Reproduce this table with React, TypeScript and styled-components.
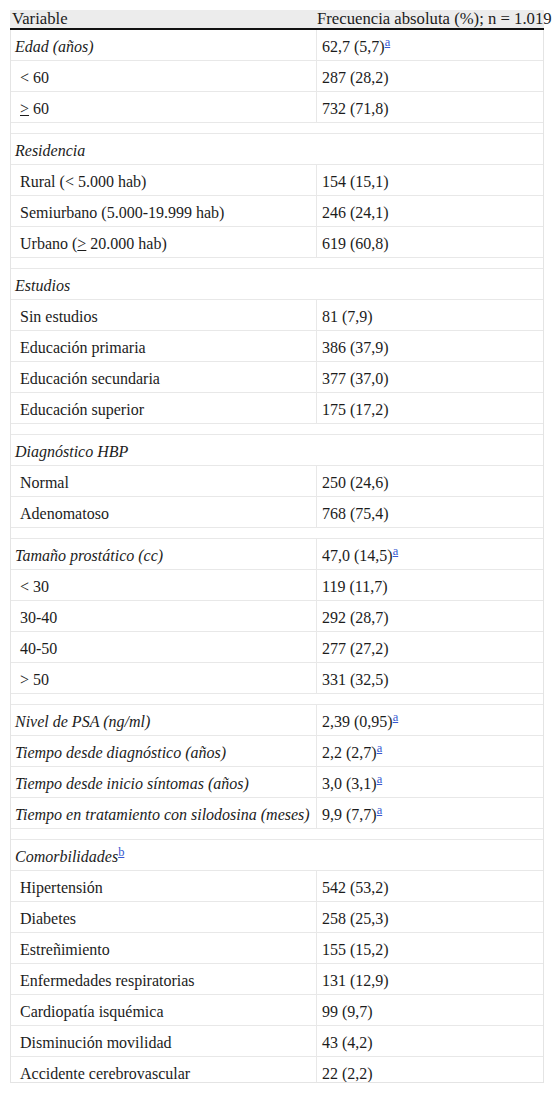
import React from 'react';
import styled, { createGlobalStyle } from 'styled-components';

const GlobalStyle = createGlobalStyle`
  body {
    margin: 0;
    padding: 0;
    background: #ffffff;
    font-family: "Times New Roman", "Liberation Serif", Tinos, serif;
    color: #1c1c1c;
  }
`;

const Page = styled.div`
  padding: 10px 11px 0 10px;
`;

const HeaderRow = styled.div`
  display: flex;
  width: 534px;
  height: 20px;
  background: #ececec;
  border-bottom: 2px solid #111111;
  box-sizing: border-box;
  font-size: 16.7px;
  line-height: 18px;
`;

const HeadCell = styled.div<{ $w?: number; $pad: number }>`
  ${(p) => (p.$w ? `width: ${p.$w}px; flex: none;` : 'flex: 1;')}
  padding-left: ${(p) => p.$pad}px;
  box-sizing: border-box;
  white-space: nowrap;
`;

const Body = styled.div`
  width: 534px;
  height: 1053px;
  overflow: hidden;
  box-sizing: border-box;
  border-left: 1px solid #e4e4e4;
  border-right: 1px solid #e4e4e4;
  border-bottom: 1px solid #e4e4e4;
`;

const Row = styled.div`
  display: flex;
  align-items: stretch;
  height: 31px;
  box-sizing: border-box;
  border-bottom: 1px solid #e8e8e8;
  font-size: 16px;
  line-height: 18px;
`;

const Spacer = styled.div`
  height: 11px;
  box-sizing: border-box;
  border-bottom: 1px solid #e8e8e8;
`;

const Cell = styled.div<{ $label?: boolean; $span?: boolean; $italic?: boolean; $indent?: boolean }>`
  display: flex;
  align-items: center;
  padding-top: 3px;
  box-sizing: border-box;
  white-space: nowrap;
  font-style: ${(p) => (p.$italic ? 'italic' : 'normal')};
  ${(p) =>
    p.$span
      ? 'flex: 1; padding-left: 4px;'
      : p.$label
      ? `width: 306px; flex: none; border-right: 1px solid #e8e8e8; padding-left: ${p.$indent ? 9 : 4}px;`
      : 'flex: 1; padding-left: 5px;'}
`;

const Note = styled.a`
  font-size: 12.5px;
  line-height: 0;
  vertical-align: 6px;
  color: #3558d0;
  text-decoration: underline;
  font-style: normal;
`;

type Item =
  | { kind: 'spacer' }
  | { kind: 'section'; label: string; note?: string }
  | { kind: 'row'; label: React.ReactNode; value: string; italic?: boolean; indent?: boolean; note?: string };

const Ge = () => <u>&gt;</u>;

const items: Item[] = [
  { kind: 'row', label: 'Edad (años)', value: '62,7 (5,7)', italic: true, note: 'a' },
  { kind: 'row', label: '< 60', value: '287 (28,2)', indent: true },
  { kind: 'row', label: <><Ge /> 60</>, value: '732 (71,8)', indent: true },
  { kind: 'spacer' },
  { kind: 'section', label: 'Residencia' },
  { kind: 'row', label: 'Rural (< 5.000 hab)', value: '154 (15,1)', indent: true },
  { kind: 'row', label: 'Semiurbano (5.000-19.999 hab)', value: '246 (24,1)', indent: true },
  { kind: 'row', label: <>Urbano (<Ge /> 20.000 hab)</>, value: '619 (60,8)', indent: true },
  { kind: 'spacer' },
  { kind: 'section', label: 'Estudios' },
  { kind: 'row', label: 'Sin estudios', value: '81 (7,9)', indent: true },
  { kind: 'row', label: 'Educación primaria', value: '386 (37,9)', indent: true },
  { kind: 'row', label: 'Educación secundaria', value: '377 (37,0)', indent: true },
  { kind: 'row', label: 'Educación superior', value: '175 (17,2)', indent: true },
  { kind: 'spacer' },
  { kind: 'section', label: 'Diagnóstico HBP' },
  { kind: 'row', label: 'Normal', value: '250 (24,6)', indent: true },
  { kind: 'row', label: 'Adenomatoso', value: '768 (75,4)', indent: true },
  { kind: 'spacer' },
  { kind: 'row', label: 'Tamaño prostático (cc)', value: '47,0 (14,5)', italic: true, note: 'a' },
  { kind: 'row', label: '< 30', value: '119 (11,7)', indent: true },
  { kind: 'row', label: '30-40', value: '292 (28,7)', indent: true },
  { kind: 'row', label: '40-50', value: '277 (27,2)', indent: true },
  { kind: 'row', label: '> 50', value: '331 (32,5)', indent: true },
  { kind: 'spacer' },
  { kind: 'row', label: 'Nivel de PSA (ng/ml)', value: '2,39 (0,95)', italic: true, note: 'a' },
  { kind: 'row', label: 'Tiempo desde diagnóstico (años)', value: '2,2 (2,7)', italic: true, note: 'a' },
  { kind: 'row', label: 'Tiempo desde inicio síntomas (años)', value: '3,0 (3,1)', italic: true, note: 'a' },
  { kind: 'row', label: 'Tiempo en tratamiento con silodosina (meses)', value: '9,9 (7,7)', italic: true, note: 'a' },
  { kind: 'spacer' },
  { kind: 'section', label: 'Comorbilidades', note: 'b' },
  { kind: 'row', label: 'Hipertensión', value: '542 (53,2)', indent: true },
  { kind: 'row', label: 'Diabetes', value: '258 (25,3)', indent: true },
  { kind: 'row', label: 'Estreñimiento', value: '155 (15,2)', indent: true },
  { kind: 'row', label: 'Enfermedades respiratorias', value: '131 (12,9)', indent: true },
  { kind: 'row', label: 'Cardiopatía isquémica', value: '99 (9,7)', indent: true },
  { kind: 'row', label: 'Disminución movilidad', value: '43 (4,2)', indent: true },
  { kind: 'row', label: 'Accidente cerebrovascular', value: '22 (2,2)', indent: true },
];

const App: React.FC = () => {
  return (
    <>
      <GlobalStyle />
      <Page>
        <HeaderRow>
          <HeadCell $w={307} $pad={2}>Variable</HeadCell>
          <HeadCell $pad={0}>Frecuencia absoluta (%); n = 1.019</HeadCell>
        </HeaderRow>
        <Body>
          {items.map((it, i) => {
            if (it.kind === 'spacer') return <Spacer key={i} />;
            if (it.kind === 'section')
              return (
                <Row key={i}>
                  <Cell $span $italic>
                    <span>
                      {it.label}
                      {it.note && <Note href="#">{it.note}</Note>}
                    </span>
                  </Cell>
                </Row>
              );
            return (
              <Row key={i}>
                <Cell $label $italic={it.italic} $indent={it.indent}>
                  <span>{it.label}</span>
                </Cell>
                <Cell>
                  <span>
                    {it.value}
                    {it.note && <Note href="#">{it.note}</Note>}
                  </span>
                </Cell>
              </Row>
            );
          })}
        </Body>
      </Page>
    </>
  );
};

export default App;
